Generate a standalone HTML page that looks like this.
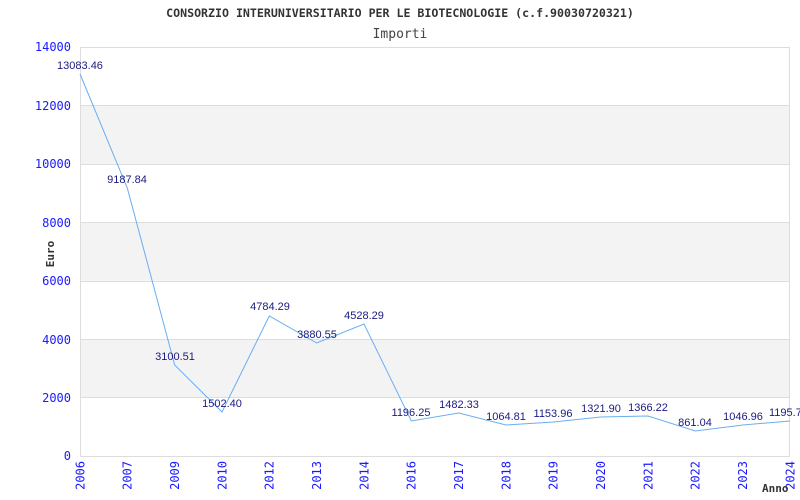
<!DOCTYPE html>
<html><head><meta charset="utf-8"><style>
html,body{margin:0;padding:0;background:#fff;}
svg{display:block}
.t{font-family:"DejaVu Sans Mono","Liberation Mono",monospace;}
.v{font-family:"Liberation Sans",Arial,sans-serif;font-size:11px;fill:#1a1a80;text-anchor:middle;}
.y{font-family:"DejaVu Sans Mono","Liberation Mono",monospace;font-size:12px;fill:#1a1aff;text-anchor:end;}
.x{font-family:"DejaVu Sans Mono","Liberation Mono",monospace;font-size:12px;fill:#1a1aff;text-anchor:end;}
</style></head><body>
<svg width="800" height="500" viewBox="0 0 800 500" xmlns="http://www.w3.org/2000/svg">
<text class="t" x="400" y="17" text-anchor="middle" font-size="11.6" font-weight="bold" fill="#333">CONSORZIO INTERUNIVERSITARIO PER LE BIOTECNOLOGIE (c.f.90030720321)</text>
<text class="t" x="400" y="38" text-anchor="middle" font-size="13" fill="#444">Importi</text>
<rect x="80.5" y="105.5" width="709" height="58.4" fill="#f3f3f3"/>
<rect x="80.5" y="222.3" width="709" height="58.4" fill="#f3f3f3"/>
<rect x="80.5" y="339.1" width="709" height="58.4" fill="#f3f3f3"/>
<g stroke="#ddd" stroke-width="1">
<line x1="80" y1="47.5" x2="790" y2="47.5"/>
<line x1="80" y1="105.5" x2="790" y2="105.5"/>
<line x1="80" y1="164.5" x2="790" y2="164.5"/>
<line x1="80" y1="222.5" x2="790" y2="222.5"/>
<line x1="80" y1="281.5" x2="790" y2="281.5"/>
<line x1="80" y1="339.5" x2="790" y2="339.5"/>
<line x1="80" y1="397.5" x2="790" y2="397.5"/>
<line x1="80.5" y1="47" x2="80.5" y2="456"/>
<line x1="789.5" y1="47" x2="789.5" y2="456"/>
<line x1="80" y1="456.5" x2="790" y2="456.5"/>
</g>
<g class="y">
<text x="71" y="51">14000</text>
<text x="71" y="110">12000</text>
<text x="71" y="168">10000</text>
<text x="71" y="227">8000</text>
<text x="71" y="285">6000</text>
<text x="71" y="344">4000</text>
<text x="71" y="402">2000</text>
<text x="71" y="460">0</text>
</g>
<text class="t" transform="translate(54,254) rotate(-90)" text-anchor="middle" font-size="11" font-weight="bold" fill="#333">Euro</text>
<polyline fill="none" stroke="#6aaef0" stroke-width="1" points="80,74 127.3,188 174.7,365 222,412 269.3,316 316.7,343 364,324 411.3,421 458.7,413 506,425 553.3,422 600.7,417 648,416 695.3,431 742.7,425 790,421"/>
<g class="v">
<text x="80" y="69">13083.46</text>
<text x="127" y="183">9187.84</text>
<text x="175" y="360">3100.51</text>
<text x="222" y="407">1502.40</text>
<text x="270" y="310">4784.29</text>
<text x="317" y="338">3880.55</text>
<text x="364" y="319">4528.29</text>
<text x="411" y="416">1196.25</text>
<text x="459" y="408">1482.33</text>
<text x="506" y="420">1064.81</text>
<text x="553" y="417">1153.96</text>
<text x="601" y="412">1321.90</text>
<text x="648" y="411">1366.22</text>
<text x="695" y="426">861.04</text>
<text x="743" y="420">1046.96</text>
<text x="769" y="416" text-anchor="start">1195.7</text>
</g>
<g class="x">
<text transform="translate(84.5,461) rotate(-90)">2006</text>
<text transform="translate(131.5,461) rotate(-90)">2007</text>
<text transform="translate(179,461) rotate(-90)">2009</text>
<text transform="translate(226.5,461) rotate(-90)">2010</text>
<text transform="translate(273.5,461) rotate(-90)">2012</text>
<text transform="translate(321,461) rotate(-90)">2013</text>
<text transform="translate(368.5,461) rotate(-90)">2014</text>
<text transform="translate(415.5,461) rotate(-90)">2016</text>
<text transform="translate(463,461) rotate(-90)">2017</text>
<text transform="translate(510.5,461) rotate(-90)">2018</text>
<text transform="translate(557.5,461) rotate(-90)">2019</text>
<text transform="translate(605,461) rotate(-90)">2020</text>
<text transform="translate(652.5,461) rotate(-90)">2021</text>
<text transform="translate(699.5,461) rotate(-90)">2022</text>
<text transform="translate(747,461) rotate(-90)">2023</text>
<text transform="translate(794.5,461) rotate(-90)">2024</text>
</g>
<text class="t" x="762" y="492" font-size="11" font-weight="bold" fill="#333">Anno</text>
</svg>
</body></html>
